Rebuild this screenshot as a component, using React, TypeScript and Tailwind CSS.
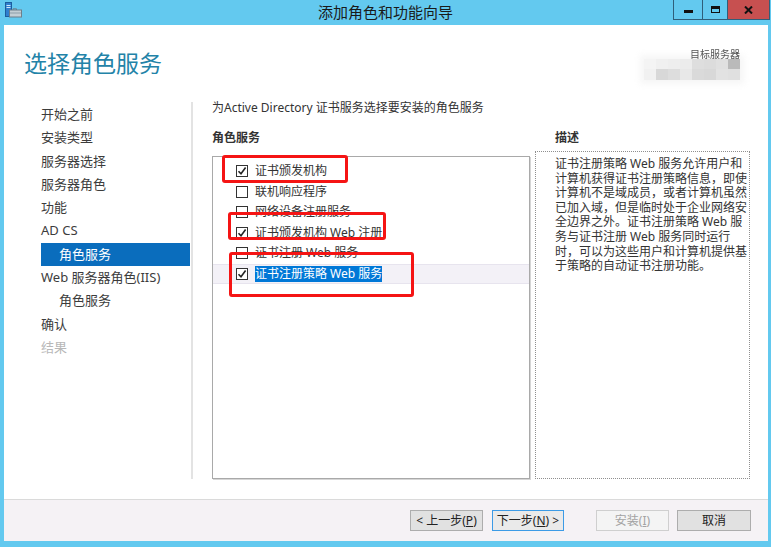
import React from 'react';

const font = { fontFamily: '"Noto Sans", "Noto Sans CJK SC", sans-serif' };

const navItems: { label: string; indent?: boolean; active?: boolean; disabled?: boolean }[] = [
  { label: '开始之前' },
  { label: '安装类型' },
  { label: '服务器选择' },
  { label: '服务器角色' },
  { label: '功能' },
  { label: 'AD CS' },
  { label: '角色服务', indent: true, active: true },
  { label: 'Web 服务器角色(IIS)' },
  { label: '角色服务', indent: true },
  { label: '确认' },
  { label: '结果', disabled: true },
];

const services = [
  { label: '证书颁发机构', checked: true },
  { label: '联机响应程序', checked: false },
  { label: '网络设备注册服务', checked: false },
  { label: '证书颁发机构 Web 注册', checked: true },
  { label: '证书注册 Web 服务', checked: false },
  { label: '证书注册策略 Web 服务', checked: true, selected: true },
];

const descLines = [
  '证书注册策略 Web 服务允许用户和',
  '计算机获得证书注册策略信息，即使',
  '计算机不是域成员，或者计算机虽然',
  '已加入域，但是临时处于企业网络安',
  '全边界之外。证书注册策略 Web 服',
  '务与证书注册 Web 服务同时运行',
  '时，可以为这些用户和计算机提供基',
  '于策略的自动证书注册功能。',
];

const blurRow1 = ['#f4f4f4', '#f0f0f0', '#eeeeee', '#ececec', '#dedede', '#dcdcdc', '#e0e0e0', '#bababa'];
const blurRow2 = ['#f1f1f1', '#d8d8d8', '#dddddd', '#e8e8e8', '#dadada', '#d8d8d8', '#e2e2e2', '#e0e0e0'];

function CheckBox({ checked }: { checked: boolean }) {
  return (
    <span className="w-[12px] h-[12px] border border-[#333] bg-white flex items-center justify-center shrink-0">
      {checked && (
        <svg width="10" height="10" viewBox="0 0 10 10">
          <path d="M1.5 5.2 L4 7.8 L8.6 1.6" stroke="#222" strokeWidth="1.6" fill="none" />
        </svg>
      )}
    </span>
  );
}

function AppIcon() {
  return (
    <svg width="17" height="16" viewBox="0 0 17 16">
      <rect x="0.5" y="0.5" width="6" height="14" fill="#2f7fce" stroke="#1b5e9e" />
      <rect x="1.5" y="3" width="4" height="1" fill="#cfe6fb" />
      <rect x="1.5" y="5" width="4" height="1" fill="#cfe6fb" />
      <path d="M8 8 V6.8 H11.5 V8" stroke="#6d7f8b" fill="none" />
      <rect x="4.5" y="8" width="12" height="7" fill="#c3ced5" stroke="#6d7f8b" />
      <rect x="5" y="10.5" width="11" height="1" fill="#8d9ea9" />
    </svg>
  );
}

export default function App() {
  return (
    <div className="w-[771px] h-[547px] bg-[#63c9ef] flex flex-col relative overflow-hidden" style={font}>
      {/* title bar */}
      <div className="h-[25px] grid grid-cols-[1fr_auto_1fr] items-start shrink-0">
        <div className="pl-[5px] pt-[2px]">
          <AppIcon />
        </div>
        <div className="text-[15px] leading-[24px] text-[#1a1a1a]">添加角色和功能向导</div>
        <div className="flex justify-end pr-[1px]">
          <div className="w-[29px] h-[20px] border-l border-b border-[#2f5f7a] flex items-center justify-center">
            <span className="w-[9px] h-[3px] bg-[#111] mt-[4px]" />
          </div>
          <div className="w-[25px] h-[20px] border-l border-b border-[#2f5f7a] flex items-center justify-center">
            <span className="w-[9px] h-[7px] border border-[#111] border-t-[3px]" />
          </div>
          <div className="w-[43px] h-[20px] border-x border-b border-[#2f5f7a] bg-[#c75050] flex items-center justify-center">
            <svg width="9" height="8" viewBox="0 0 9 8">
              <path d="M1 0.5 L8 7.5 M8 0.5 L1 7.5" stroke="#111" strokeWidth="2" />
            </svg>
          </div>
        </div>
      </div>

      {/* client area */}
      <div className="flex-1 ml-[4px] mr-[3px] mb-[6px] bg-white flex flex-col">
        {/* header */}
        <div className="h-[75px] shrink-0 flex justify-between items-start pl-[20px] pr-[28px]">
          <div className="pt-[23px] text-[23px] leading-[30px] text-[#2383a8]">选择角色服务</div>
          <div className="pt-[25px] flex flex-col items-end">
            <div className="text-[10px] leading-[8px] text-[#555] blur-[0.4px]">目标服务器</div>
            <div className="mt-[1px] flex flex-col shadow-[0_0_6px_4px_rgba(245,245,245,0.9)]">
              <div className="flex">
                {blurRow1.map((c, i) => (
                  <span key={i} className="w-[12px] h-[10px]" style={{ background: c }} />
                ))}
              </div>
              <div className="flex">
                {blurRow2.map((c, i) => (
                  <span key={i} className="w-[12px] h-[11px]" style={{ background: c }} />
                ))}
              </div>
            </div>
          </div>
        </div>

        {/* body */}
        <div className="flex-1 flex">
          <div className="w-[187px] pl-[37px] pr-[1px] pt-[3px] shrink-0">
            {navItems.map((n, i) => (
              <div
                key={i}
                className={
                  'h-[23.3px] leading-[23.3px] text-[13px] whitespace-nowrap ' +
                  (n.indent ? 'pl-[18px] ' : '') +
                  (n.active ? 'bg-[#0a6dbd] text-white ' : n.disabled ? 'text-[#b8b8b8] ' : 'text-[#3c3c3c] ')
                }
              >
                {n.label}
              </div>
            ))}
          </div>
          <div className="w-[2px] h-[377px] mt-[2px] bg-[#e3e3e3] shrink-0" />

          <div className="ml-[19px] flex flex-col">
            <div className="text-[12px] leading-[16px] text-[#333] whitespace-nowrap">
              为Active Directory 证书服务选择要安装的角色服务
            </div>
            <div className="mt-[14px] flex gap-[5px]">
              <div className="w-[318px] flex flex-col">
                <div className="text-[12px] leading-[16px] font-bold text-[#333]">角色服务</div>
                <div className="mt-[10px] h-[323px] border border-[#a9a9a9] shadow-[1px_1px_0_#d6d6d6] pt-[4px] bg-white">
                  {services.map((s, i) => (
                    <div
                      key={i}
                      className={
                        'h-[20.5px] flex items-center pl-[23px] gap-[7px] text-[12px] text-[#333] whitespace-nowrap ' +
                        (s.selected ? 'bg-[#f3f1f7] border-y border-[#e7e4ee]' : '')
                      }
                    >
                      <CheckBox checked={s.checked} />
                      <span className={'leading-[16px] ' + (s.selected ? 'bg-[#0078d7] text-white' : '')}>{s.label}</span>
                    </div>
                  ))}
                </div>
              </div>
              <div className="w-[215px] flex flex-col">
                <div className="pl-[20px] text-[12px] leading-[16px] font-bold text-[#333]">描述</div>
                <div className="mt-[5px] h-[328px] border border-dotted border-[#8f8f8f] pl-[19px] pt-[5px]">
                  <div className="text-[12px] leading-[14.6px] text-[#333] whitespace-nowrap">
                    {descLines.map((l, i) => (
                      <div key={i}>{l}</div>
                    ))}
                  </div>
                </div>
              </div>
            </div>
          </div>
        </div>

        {/* footer */}
        <div className="h-[42px] shrink-0 border-t border-[#dadada] bg-[#f5f2f5] flex items-center justify-end pr-[17px] text-[12px]">
          <button className="w-[73px] h-[21px] border border-[#adadad] bg-[#e1e1e1] text-[#222] leading-[19px]">
            &lt; 上一步(<span className="underline">P</span>)
          </button>
          <button className="ml-[9px] w-[72px] h-[21px] border border-[#3c9be6] bg-[#eaeaea] text-[#222] leading-[19px]">
            下一步(<span className="underline">N</span>) &gt;
          </button>
          <button className="ml-[32px] w-[73px] h-[21px] border border-[#cfcfcf] bg-[#f4f4f4] text-[#a3a3a3] leading-[19px]">
            安装(<span className="underline">I</span>)
          </button>
          <button className="ml-[8px] w-[74px] h-[21px] border border-[#adadad] bg-[#e1e1e1] text-[#222] leading-[19px]">
            取消
          </button>
        </div>
      </div>

      {/* red annotation boxes */}
      <div className="absolute left-[222px] top-[155px] w-[126px] h-[28px] border-[3px] border-[#f51414] rounded-[3px]" />
      <div className="absolute left-[228px] top-[212px] w-[158px] h-[28px] border-[3px] border-[#f51414] rounded-[3px]" />
      <div className="absolute left-[229px] top-[252px] w-[185px] h-[45px] border-[3px] border-[#f51414] rounded-[3px]" />
    </div>
  );
}
